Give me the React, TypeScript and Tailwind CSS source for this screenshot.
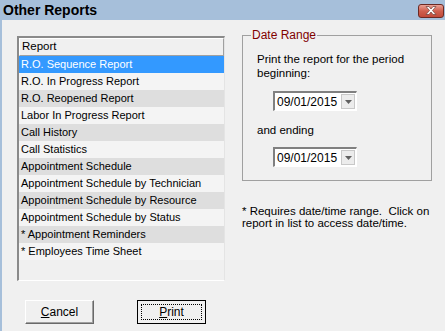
const reports = [
  "R.O. Sequence Report",
  "R.O. In Progress Report",
  "R.O. Reopened Report",
  "Labor In Progress Report",
  "Call History",
  "Call Statistics",
  "Appointment Schedule",
  "Appointment Schedule by Technician",
  "Appointment Schedule by Resource",
  "Appointment Schedule by Status",
  "* Appointment Reminders",
  "* Employees Time Sheet",
];

const DateBox = ({ value }: { value: string }) => (
  <div className="flex h-[20px] w-[84px] items-stretch border-t-2 border-l-2 border-b border-r border-t-[#808080] border-l-[#808080] border-b-white border-r-white bg-white">
    <div className="flex flex-1 items-center pl-[2px] text-[12px]">{value}</div>
    <div className="my-[1px] mr-[1px] flex w-[14px] items-center justify-center border border-[#c8c8c8] bg-[#ececec]">
      <svg width="7" height="4" viewBox="0 0 7 4">
        <path d="M0 0 H7 L3.5 4 Z" fill="#606060" />
      </svg>
    </div>
  </div>
);

export default function App() {
  return (
    <div
      className="h-[331px] w-[445px] overflow-hidden bg-[#f0f0f0] text-black"
      style={{ fontFamily: '"Liberation Sans", Arial, sans-serif' }}
    >
      {/* title bar */}
      <div className="flex h-[20px] items-center justify-between bg-[#a6bfda] pl-[3px] pr-[1px]">
        <span className="text-[14px] font-bold leading-none">Other Reports</span>
        <button className="mt-[1px] flex h-[14px] w-[26px] items-center justify-center rounded-[3px] border border-[#6b2a24] bg-gradient-to-b from-[#e9a196] via-[#d0604f] to-[#c24a3a]">
          <svg width="12" height="9" viewBox="0 0 12 9">
            <path
              d="M1 0.5 L4 0.5 L6 3 L8 0.5 L11 0.5 L7.5 4.5 L11 8.5 L8 8.5 L6 6 L4 8.5 L1 8.5 L4.5 4.5 Z"
              fill="#ffffff"
              stroke="#7a4a44"
              strokeWidth="0.8"
            />
          </svg>
        </button>
      </div>

      <div className="h-[311px] border-l-2 border-[#a6bfda]">
        <div className="flex items-start">
          {/* report list */}
          <div className="ml-[15px] mt-[16px] h-[245px] w-[208px] border-t-2 border-l-2 border-b border-r border-t-[#8a8a8a] border-l-[#8a8a8a] border-b-white border-r-[#e4e4e4]">
            <div className="flex h-[18px] items-center border-b border-r border-[#a0a0a0] border-t border-l border-t-white border-l-white bg-[#f0f0f0] pl-[2px] text-[11.5px]">
              Report
            </div>
            {reports.map((r, i) => (
              <div
                key={r}
                className={
                  i === 0
                    ? "flex h-[17px] items-center bg-[#3399ff] pl-[2px] text-[11px] text-white"
                    : i % 2 === 1
                      ? "flex h-[17px] items-center bg-[#f4f4f4] pl-[2px] text-[11px]"
                      : "flex h-[17px] items-center bg-[#dedede] pl-[2px] text-[11px]"
                }
              >
                {r}
              </div>
            ))}
          </div>

          {/* date range */}
          <div className="ml-[17px] mt-[8px] w-[190px]">
            <fieldset className="h-[153px] border border-[#a0a0a0] px-[14px]">
              <legend className="ml-[-6px] px-[1px] text-[12px] leading-[15px] text-[#800000]">Date Range</legend>
              <p className="mt-[9px] text-[11.5px] leading-[14px]">
                Print the report for the period beginning:
              </p>
              <div className="ml-[16px] mt-[11px]">
                <DateBox value="09/01/2015" />
              </div>
              <p className="mt-[12px] text-[11.5px] leading-[14px]">and ending</p>
              <div className="ml-[16px] mt-[10px]">
                <DateBox value="09/01/2015" />
              </div>
            </fieldset>
            <p className="mt-[24px] text-[11.5px] leading-[12px]">
              * Requires date/time range.&nbsp; Click on report in list to access date/time.
            </p>
          </div>
        </div>

        {/* buttons */}
        <div className="mt-[19px] flex">
          <button className="ml-[23px] h-[24px] w-[69px] border border-t-white border-l-white border-b-[#696969] border-r-[#696969] bg-[#f0f0f0] text-[12px] shadow-[inset_-1px_-1px_0_#a0a0a0]">
            <span className="underline">C</span>ancel
          </button>
          <button className="ml-[43px] h-[24px] w-[69px] border border-black bg-[#f0f0f0] p-[3px] text-[12px]">
            <div className="flex h-full w-full items-center justify-center border border-dotted border-black">
              <span className="underline">P</span>rint
            </div>
          </button>
        </div>
      </div>
    </div>
  );
}
